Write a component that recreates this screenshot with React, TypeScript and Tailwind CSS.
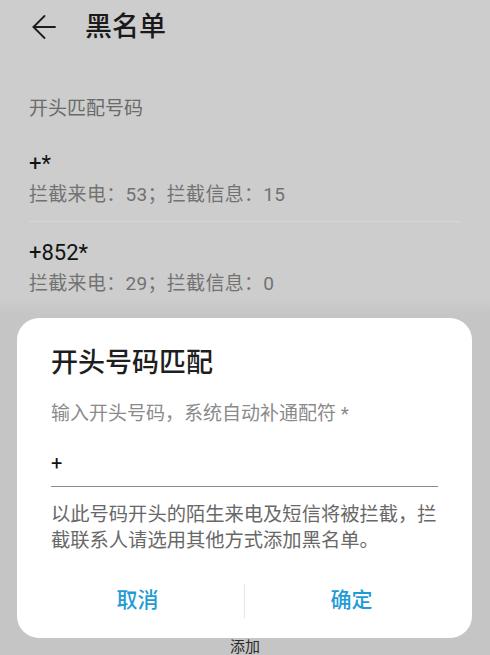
const rules = [
  { prefix: '+*', calls: 53, messages: 15 },
  { prefix: '+852*', calls: 29, messages: 0 },
];

function BackArrow() {
  return (
    <svg width="24" height="24" viewBox="0 0 24 24" fill="none" stroke="#1c1c1c" strokeWidth="1.8" strokeLinecap="round" strokeLinejoin="round">
      <path d="M23 12H1.5" />
      <path d="M12.5 1L1.5 12l11 11" />
    </svg>
  );
}

export default function App() {
  return (
    <div
      className="relative w-[490px] h-[655px] overflow-hidden bg-[#cdcdcd] flex flex-col"
      style={{ fontFamily: 'Roboto, "Noto Sans CJK SC", sans-serif' }}
    >
      {/* header */}
      <div className="flex items-center h-[54px] pl-[32px] gap-[29px] shrink-0">
        <BackArrow />
        <h1 className="text-[27px] font-medium text-[#1a1a1a] leading-[34px]">黑名单</h1>
      </div>

      {/* blocked prefixes list */}
      <div className="px-[29px] shrink-0">
        <div className="mt-[42px] text-[19px] leading-[26px] text-[#6a6a6a]">开头匹配号码</div>
        <div className="mt-[11px]">
          {rules.map((r, i) => (
            <div
              key={r.prefix}
              className={i < rules.length - 1 ? 'pt-[17px] pb-[13px] border-b border-[#d6d6d6]' : 'pt-[17px]'}
            >
              <div className="text-[22px] leading-[28px] text-[#121212]">{r.prefix}</div>
              <div className="mt-[4px] text-[19px] leading-[26px] tracking-[0.3px] text-[#727272]">
                拦截来电：{r.calls}；拦截信息：{r.messages}
              </div>
            </div>
          ))}
        </div>
      </div>

      {/* lower page area with bottom toolbar */}
      <div className="flex-1 flex flex-col">
        <div className="h-[18px] bg-gradient-to-b from-[#cdcdcd] to-[#c5c5c5]" />
        <div className="flex-1 bg-[#c5c5c5] flex flex-col justify-end items-center">
          <span className="text-[15px] leading-[16px] text-[#2a2a2a]">添加</span>
        </div>
      </div>

      {/* prefix match dialog */}
      <div className="absolute left-[17px] right-[18px] bottom-[17px] bg-white rounded-[22px] px-[14px] pt-[27px] pb-[9px]">
        <div className="px-[20px]">
          <div className="text-[27px] font-medium leading-[36px] text-[#1e1e1e]">开头号码匹配</div>
          <div className="mt-[20px] text-[19px] leading-[26px] text-[#8a8a8a]">输入开头号码，系统自动补通配符 *</div>
          <div className="mt-[22px] pb-[9px] border-b-[1.5px] border-[#8c8c8c]">
            <div className="text-[20px] leading-[28px] text-[#111]">+</div>
          </div>
          <p className="mt-[15px] text-[19.3px] leading-[26px] text-[#686868]">
            以此号码开头的陌生来电及短信将被拦截，拦截联系人请选用其他方式添加黑名单。
          </p>
        </div>
        <div className="mt-[19px] h-[56px] flex items-center">
          <button className="flex-1 h-full text-[21px] font-medium text-[#1f9bd6]">取消</button>
          <div className="w-px h-[34px] bg-[#e6e6e6]" />
          <button className="flex-1 h-full text-[21px] font-medium text-[#1f9bd6]">确定</button>
        </div>
      </div>
    </div>
  );
}
